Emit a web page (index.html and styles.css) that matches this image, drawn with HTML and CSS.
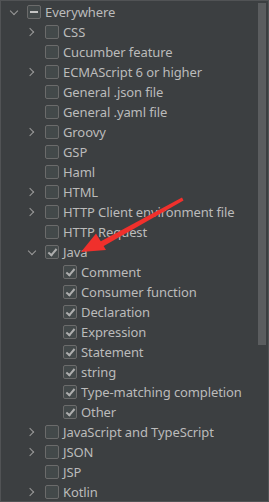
FILE: index.html
```html
<!DOCTYPE html>
<html lang="en">
<head>
    <meta charset="UTF-8">
    <title>Postfix Completion</title>
    <link rel="stylesheet" href="styles.css">
</head>
<body>
    <div class="panel">
        <div class="tree">
            <div class="row lvl0"><span class="chev down"></span><span class="box mixed"></span><span class="label">Everywhere</span></div>
            <div class="row lvl1"><span class="chev right"></span><span class="box"></span><span class="label">CSS</span></div>
            <div class="row lvl1"><span class="chev"></span><span class="box"></span><span class="label">Cucumber feature</span></div>
            <div class="row lvl1"><span class="chev right"></span><span class="box"></span><span class="label">ECMAScript 6 or higher</span></div>
            <div class="row lvl1"><span class="chev"></span><span class="box"></span><span class="label">General .json file</span></div>
            <div class="row lvl1"><span class="chev"></span><span class="box"></span><span class="label">General .yaml file</span></div>
            <div class="row lvl1"><span class="chev right"></span><span class="box"></span><span class="label">Groovy</span></div>
            <div class="row lvl1"><span class="chev"></span><span class="box"></span><span class="label">GSP</span></div>
            <div class="row lvl1"><span class="chev"></span><span class="box"></span><span class="label">Haml</span></div>
            <div class="row lvl1"><span class="chev right"></span><span class="box"></span><span class="label">HTML</span></div>
            <div class="row lvl1"><span class="chev right"></span><span class="box"></span><span class="label">HTTP Client environment file</span></div>
            <div class="row lvl1"><span class="chev"></span><span class="box"></span><span class="label">HTTP Request</span></div>
            <div class="row lvl1"><span class="chev down"></span><span class="box checked"></span><span class="label">Java</span></div>
            <div class="row lvl2"><span class="chev"></span><span class="box checked"></span><span class="label">Comment</span></div>
            <div class="row lvl2"><span class="chev"></span><span class="box checked"></span><span class="label">Consumer function</span></div>
            <div class="row lvl2"><span class="chev"></span><span class="box checked"></span><span class="label">Declaration</span></div>
            <div class="row lvl2"><span class="chev"></span><span class="box checked"></span><span class="label">Expression</span></div>
            <div class="row lvl2"><span class="chev"></span><span class="box checked"></span><span class="label">Statement</span></div>
            <div class="row lvl2"><span class="chev"></span><span class="box checked"></span><span class="label">string</span></div>
            <div class="row lvl2"><span class="chev"></span><span class="box checked"></span><span class="label">Type-matching completion</span></div>
            <div class="row lvl2"><span class="chev"></span><span class="box checked"></span><span class="label">Other</span></div>
            <div class="row lvl1"><span class="chev right"></span><span class="box"></span><span class="label">JavaScript and TypeScript</span></div>
            <div class="row lvl1"><span class="chev right"></span><span class="box"></span><span class="label">JSON</span></div>
            <div class="row lvl1"><span class="chev"></span><span class="box"></span><span class="label">JSP</span></div>
            <div class="row lvl1"><span class="chev right"></span><span class="box"></span><span class="label">Kotlin</span></div>
        </div>
        <div class="scrollbar"><div class="thumb"></div></div>

        <!-- annotation arrow drawn over the tree -->
        <svg class="arrow" width="269" height="502" viewBox="0 0 269 502">
            <polygon points="182,196.5 183.5,199.5 102,246 99.5,241" fill="#f0302c"/>
            <polygon points="81,251 96,232.5 106,249" fill="#f0302c"/>
        </svg>
    </div>
</body>
</html>
```

FILE: styles.css
```css
:root {
    --bg: #3c3f41;
    --border: #515355;
    --text: #bbbbbb;
    --box-bg: #43494a;
    --box-border: #6b6b6b;
    --mark: #aeaeae;
    --thumb: #5b5d5f;
}
html, body {
    margin: 0;
    background: var(--bg);
}
body {
    font-family: "Noto Sans", "Liberation Sans", sans-serif;
    font-size: 13px;
    color: var(--text);
}
.panel {
    position: relative;
    width: 269px;
    height: 502px;
    box-sizing: border-box;
    border: 1px solid var(--border);
    display: flex;
    overflow: hidden;
}
.tree {
    flex: 1;
    padding-top: 1px;
}
.row {
    height: 20px;
    display: flex;
    align-items: center;
    white-space: nowrap;
}
.lvl0 { padding-left: 3px; }
.lvl1 { padding-left: 21px; }
.lvl2 { padding-left: 39px; }

.chev {
    width: 18px;
    height: 20px;
    position: relative;
    flex: none;
}
.chev.right::before,
.chev.down::before {
    content: "";
    position: absolute;
    width: 5px;
    height: 5px;
    border-right: 1.5px solid #9a9a9a;
    border-bottom: 1.5px solid #9a9a9a;
}
.chev.right::before {
    left: 5px;
    top: 7px;
    transform: rotate(-45deg);
}
.chev.down::before {
    left: 6.5px;
    top: 5.5px;
    transform: rotate(45deg);
}

.box {
    width: 14px;
    height: 14px;
    box-sizing: border-box;
    margin-left: 5px;
    border: 1px solid var(--box-border);
    border-radius: 2px;
    background: var(--box-bg);
    position: relative;
    flex: none;
}
.box.mixed::before {
    content: "";
    position: absolute;
    left: 2px;
    top: 5px;
    width: 8px;
    height: 2px;
    background: #c4c4c4;
}
.box.checked::before {
    content: "";
    position: absolute;
    left: 4px;
    top: 1px;
    width: 3px;
    height: 7px;
    border-right: 2px solid var(--mark);
    border-bottom: 2px solid var(--mark);
    transform: rotate(40deg);
}
.label {
    margin-left: 4px;
    line-height: 20px;
    letter-spacing: -0.1px;
}

.scrollbar {
    width: 8px;
    padding: 2px 2px 0 0;
    flex: none;
}
.thumb {
    height: 342px;
    background: var(--thumb);
}
.arrow {
    position: absolute;
    left: -1px;
    top: 0;
    pointer-events: none;
}
```
